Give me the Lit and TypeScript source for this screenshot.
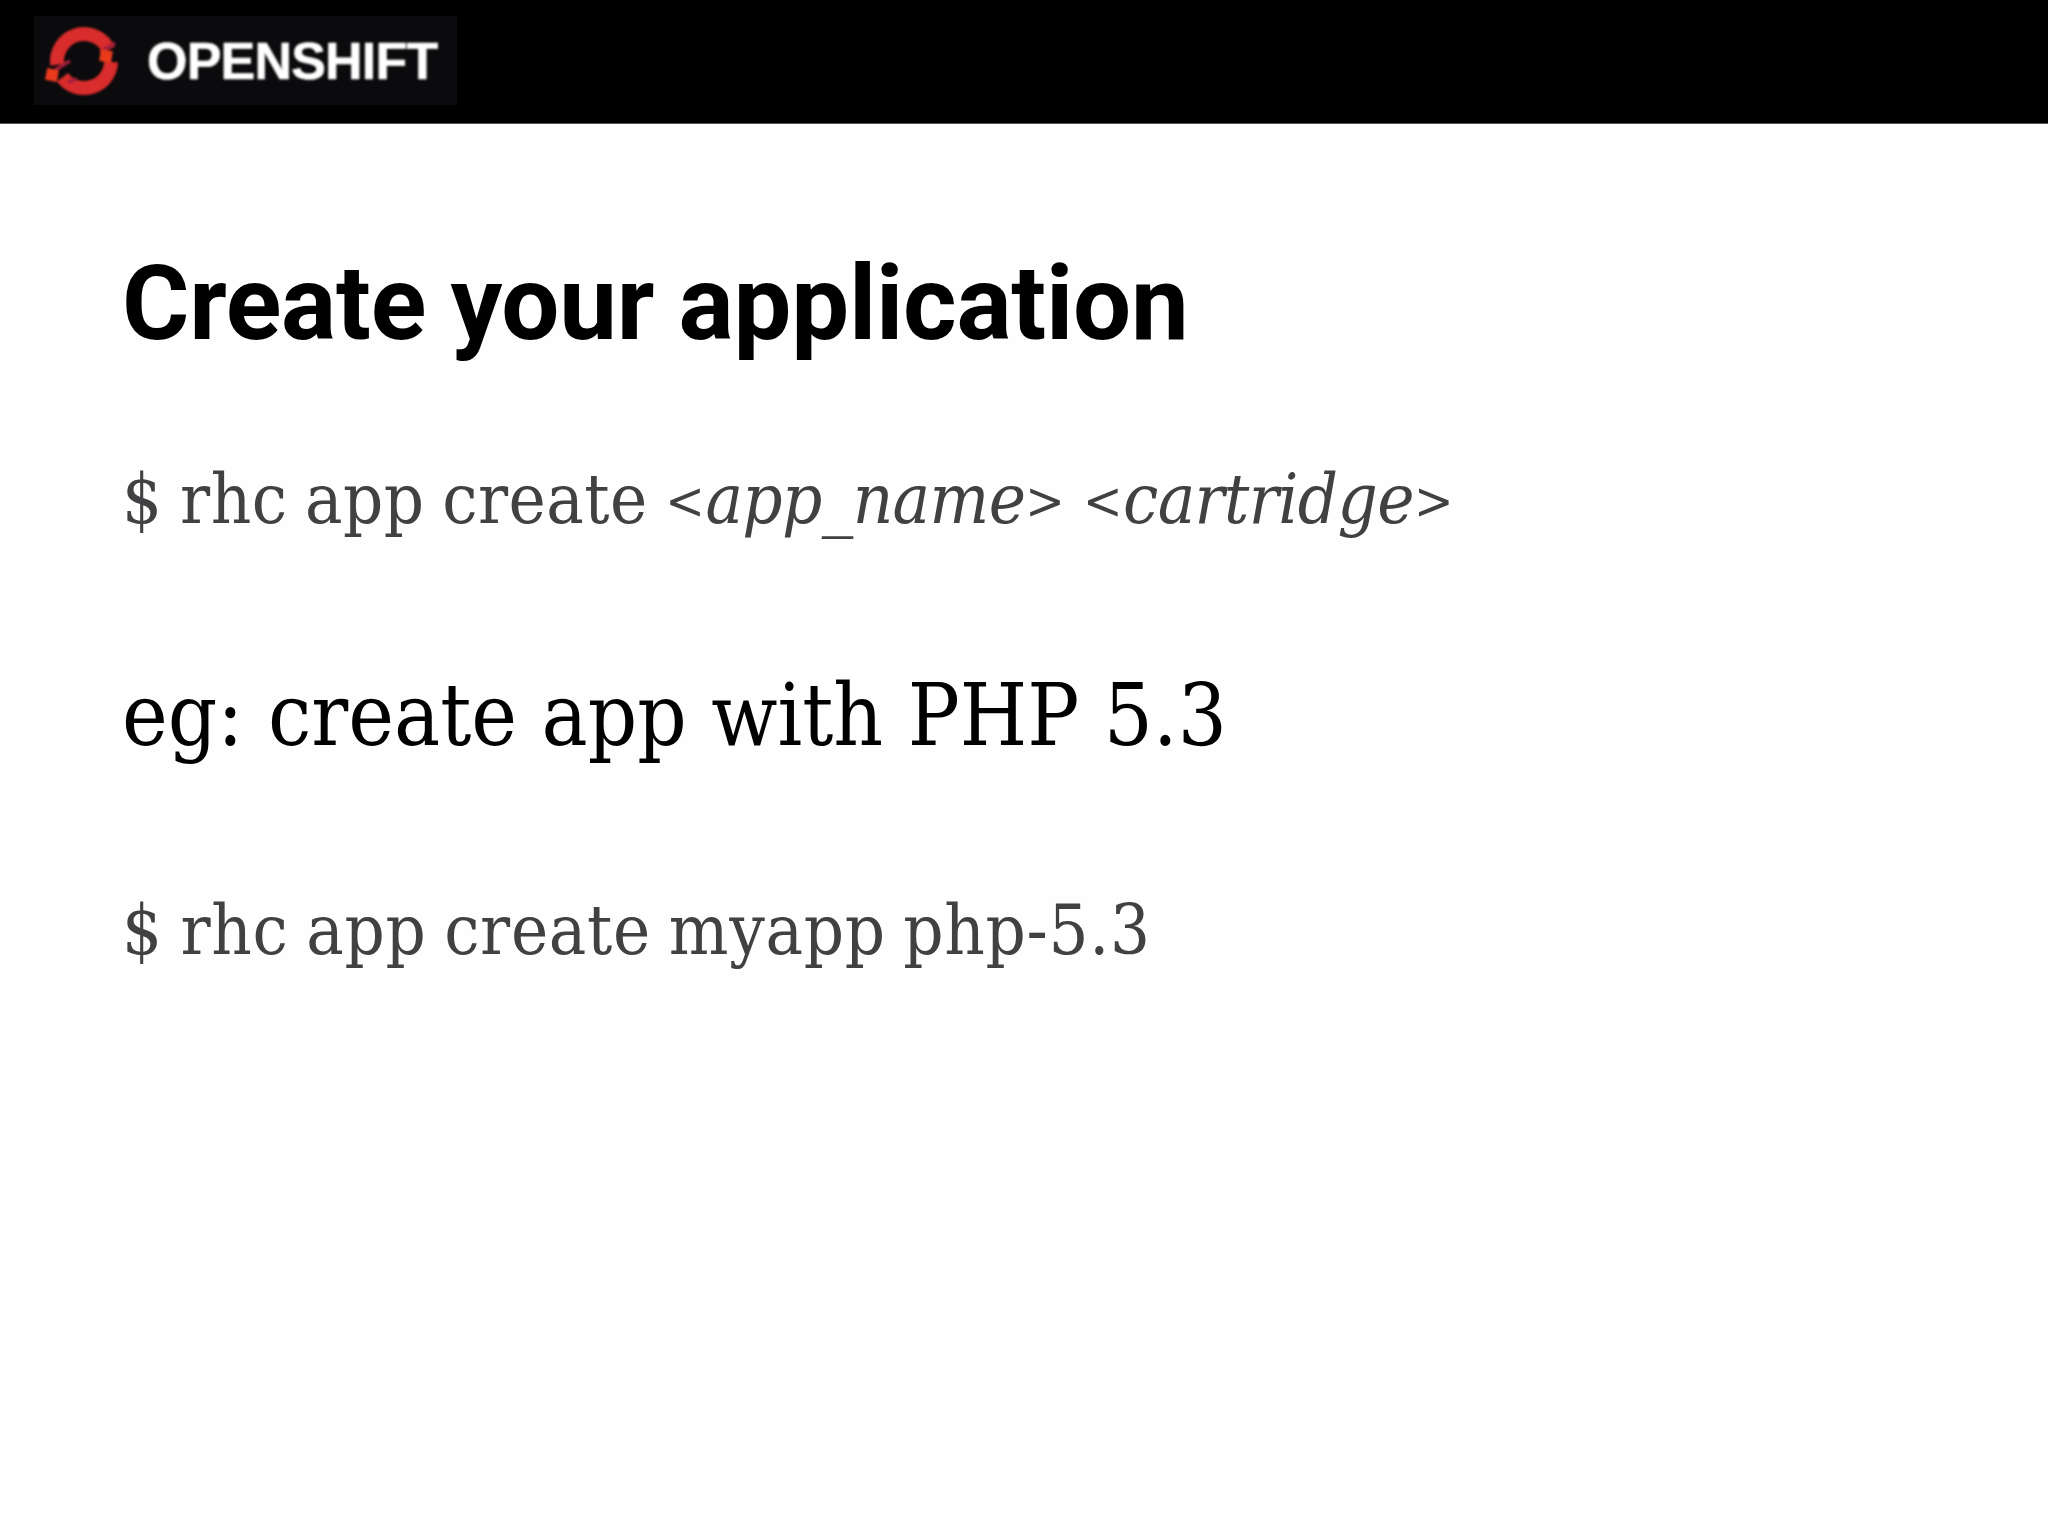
import { LitElement, html, css } from "lit";
import { customElement } from "lit/decorators.js";

@customElement("app-root")
export class AppRoot extends LitElement {
  static styles = css`
    :host { display: block; width: 2048px; height: 1536px; background: #fefefe; overflow: hidden; }
    .bar { height: 124px; background: #000; display: flex; align-items: center; padding-left: 34px; box-sizing: border-box; border-bottom: 1px solid #555; }
    .logo { width: 423px; height: 89px; background: #0b0b0d; display: flex; align-items: center; margin-top: -2px; }
    .logo svg { width: 80px; height: 80px; margin-left: 10px; flex: none; filter: blur(0.8px); }
    .brand { margin-left: 23px; color: #fff; font: 700 52px/1 "Liberation Sans", sans-serif; letter-spacing: -0.8px; -webkit-text-stroke: 0.6px #fff; filter: blur(0.9px); }
    main { padding: 0 0 0 122px; }
    h1 { margin: 125px 0 0; font: 700 103px/110px Roboto, sans-serif; color: #000; letter-spacing: -0.22px; word-spacing: -1px; }
    .cmd, .eg { margin: 0; font-family: "DejaVu Serif Condensed", "DejaVu Serif", serif; white-space: pre; }
    .cmd { font-size: 70px; line-height: 90px; color: #414042; letter-spacing: 0.5px; word-spacing: -3px; }
    .eg { font-size: 86px; line-height: 100px; color: #000; }
    .l2 { margin-top: 95px; }
    .l3 { margin-top: 119px; }
    .l4 { margin-top: 120px; letter-spacing: 0.7px; }
    em { font-style: italic; letter-spacing: -0.6px; }
    .br { font-size: 0.75em; vertical-align: 0.08em; }
  `;
  render() {
    return html`
      <div class="bar">
        <div class="logo">
          <svg viewBox="0 0 80 80" aria-hidden="true">
            <g fill="none" stroke="#d92c2c" stroke-width="14">
              <path d="M13.3 43.8 A27 27 0 0 1 64.5 28.6" />
              <path d="M67 41 A27 27 0 0 1 18.4 56.2" />
            </g>
            <g stroke="#a51e3e" stroke-width="3.5" fill="none">
              <path d="M56 31 L71 22" />
              <path d="M11 49 L26 40" />
              <path d="M24 61 L33 58" />
            </g>
            <rect x="56" y="29" width="12" height="12" fill="#ea3a1c" transform="rotate(10 62 35)" />
            <rect x="2" y="48" width="12" height="12" fill="#ea3a1c" transform="rotate(10 8 54)" />
          </svg>
          <span class="brand">OPENSHIFT</span>
        </div>
      </div>
      <main>
        <h1>Create your application</h1>
        <p class="cmd l2">$ rhc app create <span class="br">&lt;</span><em>app_name</em><span class="br">&gt;</span> <span class="br">&lt;</span><em>cartridge</em><span class="br">&gt;</span></p>
        <p class="eg l3">eg: create app with PHP 5.3</p>
        <p class="cmd l4">$ rhc app create myapp php-5.3</p>
      </main>
    `;
  }
}
